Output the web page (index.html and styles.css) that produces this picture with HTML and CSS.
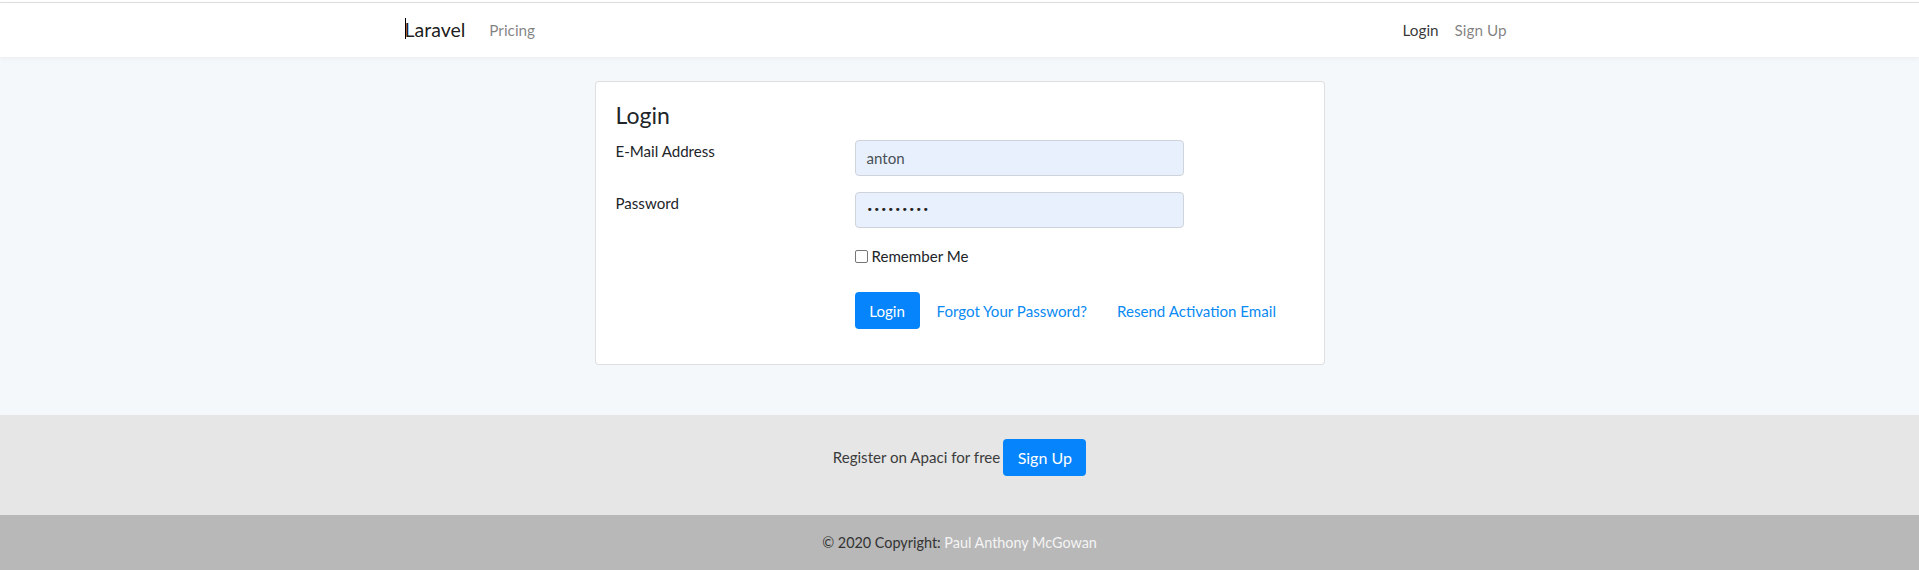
FILE: index.html
```html
<!DOCTYPE html>
<html lang="en">
<head>
<meta charset="utf-8">
<title>Laravel</title>
<link rel="stylesheet" href="styles.css">
</head>
<body>
<nav class="navbar">
  <div class="container nav-inner">
    <div class="nav-left">
      <a class="brand"><span class="caret"></span>Laravel</a>
      <a class="nav-link">Pricing</a>
    </div>
    <div class="nav-right">
      <a class="nav-link active">Login</a>
      <a class="nav-link">Sign Up</a>
    </div>
  </div>
</nav>
<main class="main">
  <div class="card">
    <h4 class="card-title">Login</h4>
    <form class="login-form">
      <label class="form-label">E-Mail Address</label>
      <div class="form-control">anton</div>
      <label class="form-label">Password</label>
      <div class="form-control dots">•••••••••</div>
      <span></span>
      <label class="check"><span class="checkbox"></span>Remember Me</label>
      <span></span>
      <div class="actions">
        <a class="btn">Login</a>
        <a class="link link-first">Forgot Your Password?</a>
        <a class="link link-second">Resend Activation Email</a>
      </div>
    </form>
  </div>
</main>
<section class="register">
  <span>Register on Apaci for free</span>
  <a class="btn btn-signup">Sign Up</a>
</section>
<footer class="footer">
  <span>© 2020 Copyright: <a class="footer-link">Paul Anthony McGowan</a></span>
</footer>
</body>
</html>
```
FILE: styles.css
```css
* { box-sizing: border-box; }
html, body { margin: 0; padding: 0; background: #fff; }
body {
  font-family: "Lato", "Liberation Sans", sans-serif;
  font-size: 15.1px;
  color: #212529;
  height: 570px;
  overflow: hidden;
}
a { text-decoration: none; }

.navbar {
  margin-top: 2px;
  border-top: 1px solid #dcdcdc;
  height: 55px;
  background: #fff;
  box-shadow: 0 2px 4px rgba(0,0,0,.04);
  position: relative;
  z-index: 1;
}
.container { width: 1110px; margin: 0 auto; }
.nav-inner {
  display: flex;
  justify-content: space-between;
  align-items: center;
  height: 100%;
  padding-bottom: 1px;
}
.nav-left, .nav-right { display: flex; align-items: center; }
.brand {
  font-size: 19.5px;
  color: rgba(0,0,0,.9);
  position: relative;
  margin-right: 16px;
}
.caret {
  position: absolute;
  left: 0;
  top: 0;
  width: 1px;
  height: 21px;
  background: #000;
}
.nav-link { color: rgba(0,0,0,.5); padding: 0 8px; font-size: 15.3px; }
.nav-link.active { color: rgba(0,0,0,.8); }

.main {
  background: #f5f8fa;
  height: 358px;
  padding-top: 24px;
}
.card {
  width: 730px;
  margin: 0 auto;
  background: #fff;
  border: 1px solid rgba(0,0,0,.125);
  border-radius: 4px;
  padding: 20px;
  height: 284px;
}
.card-title {
  margin: 0 0 12px;
  font-size: 23px;
  font-weight: 400;
  line-height: 26px;
  color: #212529;
}
.login-form {
  display: grid;
  grid-template-columns: 209px 329px;
  column-gap: 30px;
  row-gap: 16px;
  align-items: start;
}
.form-label { line-height: 23px; }
.form-control {
  height: 36px;
  border: 1px solid #ced4da;
  border-radius: 4px;
  background: #e8f0fe;
  color: #495057;
  padding: 0 11px;
  line-height: 34px;
}
.dots { font-size: 11px; letter-spacing: 0.5px; color: #222; font-family: "DejaVu Sans", sans-serif; }
.check {
  display: flex;
  align-items: center;
  line-height: 23px;
  margin-top: 1px;
  margin-bottom: 8px;
}
.checkbox {
  width: 13px;
  height: 13px;
  border: 1px solid #767676;
  border-radius: 2px;
  margin-right: 4px;
  background: #fff;
  flex-shrink: 0;
}
.actions {
  display: flex;
  align-items: center;
  grid-column: 2 / span 1;
  white-space: nowrap;
}
.actions > * { flex-shrink: 0; }
.btn {
  display: inline-flex;
  align-items: center;
  justify-content: center;
  background: #0584fc;
  color: #fff;
  border-radius: 4px;
  height: 37px;
  padding: 0 12px;
}
.actions .btn { width: 65px; }
.link { color: #0a8af2; }
.link-first { margin-left: 17px; }
.link-second { margin-left: 30px; }

.register {
  background: #e6e6e6;
  height: 100px;
  display: flex;
  justify-content: center;
  align-items: flex-start;
  padding-top: 24px;
  color: #3c3c3c;
}
.register span { line-height: 37px; margin-right: 3px; }
.btn-signup { width: 83px; font-size: 16px; }

.footer {
  background: #b8b8b8;
  height: 60px;
  display: flex;
  justify-content: center;
  padding-top: 18px;
  color: #333;
  line-height: 20px;
  font-size: 14.4px;
}
.footer-link { color: #f4f4f4; }
```
